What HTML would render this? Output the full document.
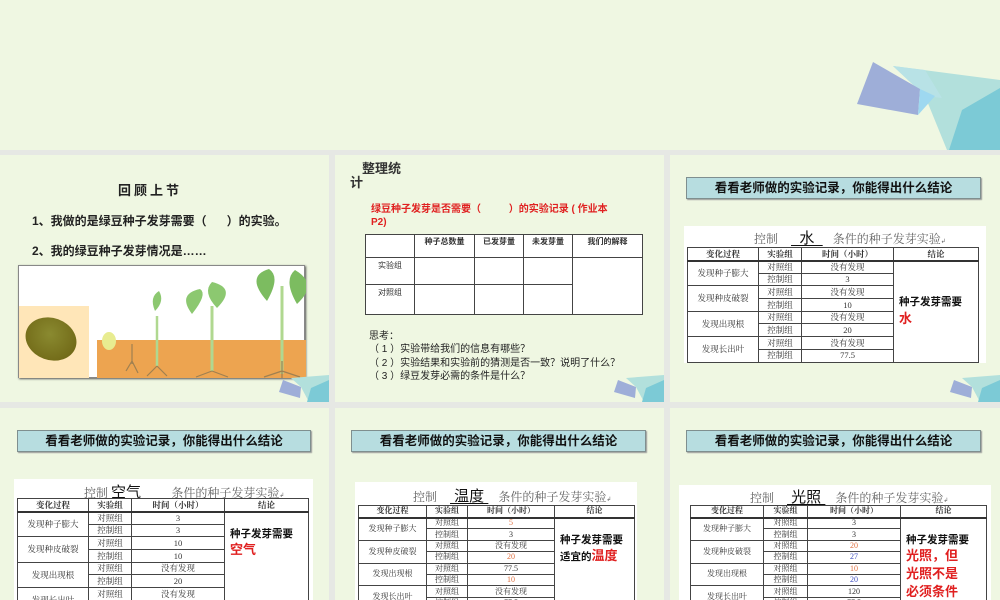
<!DOCTYPE html>
<html><head><meta charset="utf-8">
<style>
*{margin:0;padding:0;box-sizing:border-box}
body{width:1000px;height:600px;overflow:hidden;background:#e6e8e4;position:relative;font-family:"Liberation Sans","Noto Sans CJK SC",sans-serif}
.a{position:absolute}
.p{position:absolute;background:#eff7e2;overflow:hidden}
.hd{position:absolute;background:#b7dde0;border:1px solid #7f8f8f;box-shadow:1px 1px 1px #999;font-weight:bold;font-size:12.5px;text-align:center;line-height:20px;color:#111}
.wb{position:absolute;background:#fff}
table.t{position:absolute;border-collapse:collapse;table-layout:fixed;font-family:"Liberation Serif","Noto Serif CJK SC",serif;font-size:8.5px;color:#333;background:#fff}
table.t td{border:1px solid #444;text-align:center;padding:0;line-height:1;white-space:nowrap;overflow:hidden}
table.t tr.h td{border-bottom:2px solid #333;font-weight:bold}
.ttl{position:absolute;font-family:"Liberation Serif","Noto Serif CJK SC",serif;color:#666;font-size:12px;white-space:nowrap}
.ttl b{font-family:"Liberation Sans","Noto Sans CJK SC",sans-serif;font-weight:normal;color:#111;font-size:15px;text-decoration:underline;text-underline-offset:2px;padding:0 10px}
.cc{font-family:"Liberation Sans","Noto Sans CJK SC",sans-serif;font-weight:bold;color:#111;text-align:left!important;vertical-align:middle;font-size:10.5px;padding-left:5px!important;white-space:normal!important;line-height:1.4!important}
.red{color:#e02020}
.o{color:#e07040}.bl{color:#4050c0}
</style></head><body>
<div class="p" style="left:0;top:0;width:1000px;height:150px"></div>
<svg class="a" style="left:0;top:0" width="1000" height="150">
<polygon points="893,66 1000,80 1000,150 947,150 925,96" fill="#b2e0dc"/>
<polygon points="893,66 925,96 942,98 925,70" fill="#b8e2e6"/>
<polygon points="873,62 920,89 918,115 857,104" fill="#9eaed8"/>
<polygon points="920,89 935,96 918,115" fill="#9ed8f0"/>
<polygon points="962,110 1000,88 1000,150 949,150" fill="#7ccad6"/>
</svg>

<!-- Row 1 -->
<div class="p" style="left:0;top:155px;width:329px;height:247px">
  <div class="a" style="left:0;top:25px;width:300px;text-align:center;font-weight:bold;font-size:13px;letter-spacing:3px;color:#222">回顾上节</div>
  <div class="a" style="left:32px;top:57px;font-weight:bold;font-size:12px;color:#222">1、我做的是绿豆种子发芽需要（&nbsp;&nbsp;&nbsp;&nbsp;&nbsp;&nbsp;）的实验。</div>
  <div class="a" style="left:32px;top:87px;font-weight:bold;font-size:12px;color:#222">2、我的绿豆种子发芽情况是……</div>
  <div class="a" style="left:18px;top:110px;width:287px;height:113px;background:#fff;border:1px solid #888;box-shadow:1px 1px 2px #555">
    <div class="a" style="left:0;top:40px;width:70px;height:72px;background:#ffe6b8"></div>
    <div class="a" style="left:6px;top:52px;width:52px;height:42px;border-radius:50%;background:radial-gradient(circle at 45% 40%,#8a8a30,#6a6010);transform:rotate(20deg)"></div>
    <div class="a" style="left:78px;top:74px;width:209px;height:38px;background:#eda450"></div>
    <svg class="a" style="left:78px;top:0" width="209" height="112">
      <ellipse cx="12" cy="75" rx="7" ry="9" fill="#e8ec90"/>
      <path d="M115 105 V40 M185 108 V20" stroke="#b0d890" stroke-width="3"/>
      <path d="M60 100 V50" stroke="#b0d890" stroke-width="2.5"/>
      <path d="M95 48 q-15 -20 8 -25 q8 5 -8 25z M120 42 q20 -20 -5 -26 q-10 10 5 26z" fill="#8cc870"/>
      <path d="M170 35 q-22 -25 2 -32 q12 8 -2 32z M200 38 q22 -20 -2 -34 q-12 10 2 34z" fill="#7cbc60"/>
      <path d="M58 45 q-6 -14 4 -20 q6 10 -4 20z" fill="#8cc870"/>
      <path d="M35 78 v20 M35 95 l-6 10 M35 95 l6 12 M60 100 l-10 10 M60 100 l10 10 M115 105 l-16 6 M115 105 l16 6 M185 105 l-18 6 M185 105 l18 6 M185 95 v17" stroke="#a08050" stroke-width="1.2"/>
    </svg>
  </div>
  <svg class="a" style="left:279px;top:215px" width="50" height="32"><polygon points="4,10 22,17 21,28 0,22" fill="#9eaed8"/><polygon points="12,8 50,5 50,32 30,32 22,17" fill="#b2e0dc"/><polygon points="32,18 50,10 50,32 28,32" fill="#7ccad6"/></svg>
</div>

<div class="p" style="left:335px;top:155px;width:329px;height:247px">
  <div class="a" style="left:15px;top:7px;font-weight:bold;font-size:13px;color:#333;width:60px;line-height:14px"><span style="margin-left:12px">整理统</span><br>计</div>
  <div class="a" style="left:36px;top:48px;color:#e02020;font-weight:bold;font-size:10px;line-height:13px;width:280px">绿豆种子发芽是否需要（&nbsp;&nbsp;&nbsp;&nbsp;&nbsp;&nbsp;&nbsp;&nbsp;&nbsp;&nbsp;）的实验记录 ( 作业本<br>P2)</div>
  <table class="t" style="left:30px;top:79px;width:277px;font-family:'Liberation Sans','Noto Sans CJK SC',sans-serif;font-size:8px;font-weight:bold;color:#333">
    <colgroup><col style="width:49px"><col style="width:60px"><col style="width:49px"><col style="width:49px"><col style="width:70px"></colgroup>
    <tr style="height:23px"><td></td><td style="vertical-align:top;padding-top:3px">种子总数量</td><td style="vertical-align:top;padding-top:3px">已发芽量</td><td style="vertical-align:top;padding-top:3px">未发芽量</td><td style="vertical-align:top;padding-top:3px">我们的解释</td></tr>
    <tr style="height:27px"><td style="vertical-align:top;padding-top:4px;font-weight:normal">实验组</td><td></td><td></td><td></td><td rowspan="2"></td></tr>
    <tr style="height:30px"><td style="vertical-align:top;padding-top:4px;font-weight:normal">对照组</td><td></td><td></td><td></td></tr>
  </table>
  <div class="a" style="left:34px;top:175px;font-size:10px;line-height:13.3px;color:#222">思考：<br>（ 1 ）实验带给我们的信息有哪些？<br>（ 2 ）实验结果和实验前的猜测是否一致？说明了什么？<br>（ 3 ）绿豆发芽必需的条件是什么？</div>
  <svg class="a" style="left:279px;top:215px" width="50" height="32"><polygon points="4,10 22,17 21,28 0,22" fill="#9eaed8"/><polygon points="12,8 50,5 50,32 30,32 22,17" fill="#b2e0dc"/><polygon points="32,18 50,10 50,32 28,32" fill="#7ccad6"/></svg>
</div>

<div class="p" style="left:670px;top:155px;width:330px;height:247px">
  <div class="hd" style="left:16px;top:22px;width:295px;height:22px">看看老师做的实验记录，你能得出什么结论</div>
  <div class="wb" style="left:14px;top:71px;width:302px;height:137px"></div>
  <div class="ttl" style="left:84px;top:72px">控制 <b>&nbsp;&nbsp;水&nbsp;&nbsp;</b>条件的种子发芽实验<span style="font-size:6px">↲</span></div>
  <table class="t" style="left:17px;top:92px;width:291px">
    <colgroup><col style="width:71px"><col style="width:43px"><col style="width:92px"><col style="width:85px"></colgroup>
    <tr class="h" style="height:13px"><td>变化过程</td><td>实验组</td><td>时间（小时）</td><td>结论</td></tr>
    <tr style="height:12.7px"><td rowspan="2">发现种子膨大</td><td>对照组</td><td>没有发现</td><td rowspan="8" class="cc">种子发芽需要<br><span class="red" style="font-size:13px">水</span></td></tr>
    <tr style="height:12.7px"><td>控制组</td><td>3</td></tr>
    <tr style="height:12.7px"><td rowspan="2">发现种皮破裂</td><td>对照组</td><td>没有发现</td></tr>
    <tr style="height:12.7px"><td>控制组</td><td>10</td></tr>
    <tr style="height:12.7px"><td rowspan="2">发现出现根</td><td>对照组</td><td>没有发现</td></tr>
    <tr style="height:12.7px"><td>控制组</td><td>20</td></tr>
    <tr style="height:12.7px"><td rowspan="2">发现长出叶</td><td>对照组</td><td>没有发现</td></tr>
    <tr style="height:12.7px"><td>控制组</td><td>77.5</td></tr>
  </table>
  <svg class="a" style="left:280px;top:215px" width="50" height="32"><polygon points="4,10 22,17 21,28 0,22" fill="#9eaed8"/><polygon points="12,8 50,5 50,32 30,32 22,17" fill="#b2e0dc"/><polygon points="32,18 50,10 50,32 28,32" fill="#7ccad6"/></svg>
</div>

<!-- Row 2 -->
<div class="p" style="left:0;top:408px;width:329px;height:192px">
  <div class="hd" style="left:17px;top:22px;width:294px;height:22px">看看老师做的实验记录，你能得出什么结论</div>
  <div class="wb" style="left:14px;top:71px;width:299px;height:125px"></div>
  <div class="ttl" style="left:84px;top:73px">控制 <b style="padding:0 22px 0 0">空气&nbsp;&nbsp;</b>条件的种子发芽实验<span style="font-size:6px">↲</span></div>
  <table class="t" style="left:17px;top:90px;width:291px">
    <colgroup><col style="width:71px"><col style="width:43px"><col style="width:93px"><col style="width:84px"></colgroup>
    <tr class="h" style="height:13px"><td>变化过程</td><td>实验组</td><td>时间（小时）</td><td>结论</td></tr>
    <tr style="height:12.7px"><td rowspan="2">发现种子膨大</td><td>对照组</td><td>3</td><td rowspan="8" class="cc" style="vertical-align:top;padding-top:14px">种子发芽需要<br><span class="red" style="font-size:13px">空气</span><br><br><br><br></td></tr>
    <tr style="height:12.7px"><td>控制组</td><td>3</td></tr>
    <tr style="height:12.7px"><td rowspan="2">发现种皮破裂</td><td>对照组</td><td>10</td></tr>
    <tr style="height:12.7px"><td>控制组</td><td>10</td></tr>
    <tr style="height:12.7px"><td rowspan="2">发现出现根</td><td>对照组</td><td>没有发现</td></tr>
    <tr style="height:12.7px"><td>控制组</td><td>20</td></tr>
    <tr style="height:12.7px"><td rowspan="2">发现长出叶</td><td>对照组</td><td>没有发现</td></tr>
    <tr style="height:12.7px"><td>控制组</td><td>77.5</td></tr>
  </table>
</div>

<div class="p" style="left:335px;top:408px;width:329px;height:192px">
  <div class="hd" style="left:16px;top:22px;width:295px;height:22px">看看老师做的实验记录，你能得出什么结论</div>
  <div class="wb" style="left:20px;top:74px;width:282px;height:120px"></div>
  <div class="ttl" style="left:78px;top:77px">控制 <b>&nbsp;温度&nbsp;</b>条件的种子发芽实验<span style="font-size:6px">↲</span></div>
  <table class="t" style="left:23px;top:97px;width:276px;font-size:8px">
    <colgroup><col style="width:68px"><col style="width:41px"><col style="width:87px"><col style="width:80px"></colgroup>
    <tr class="h" style="height:12px"><td>变化过程</td><td>实验组</td><td>时间（小时）</td><td>结论</td></tr>
    <tr style="height:11.4px"><td rowspan="2">发现种子膨大</td><td>对照组</td><td class="o">5</td><td rowspan="8" class="cc" style="vertical-align:top;padding-top:14px">种子发芽需要<br>适宜的<span class="red" style="font-size:13px">温度</span></td></tr>
    <tr style="height:11.4px"><td>控制组</td><td>3</td></tr>
    <tr style="height:11.4px"><td rowspan="2">发现种皮破裂</td><td>对照组</td><td>没有发现</td></tr>
    <tr style="height:11.4px"><td>控制组</td><td class="o">20</td></tr>
    <tr style="height:11.4px"><td rowspan="2">发现出现根</td><td>对照组</td><td>77.5</td></tr>
    <tr style="height:11.4px"><td>控制组</td><td class="o">10</td></tr>
    <tr style="height:11.4px"><td rowspan="2">发现长出叶</td><td>对照组</td><td>没有发现</td></tr>
    <tr style="height:11.4px"><td>控制组</td><td>77.5</td></tr>
  </table>
</div>

<div class="p" style="left:670px;top:408px;width:330px;height:192px">
  <div class="hd" style="left:16px;top:22px;width:295px;height:22px">看看老师做的实验记录，你能得出什么结论</div>
  <div class="wb" style="left:9px;top:77px;width:312px;height:120px"></div>
  <div class="ttl" style="left:80px;top:78px">控制 <b>&nbsp;光照&nbsp;</b>条件的种子发芽实验<span style="font-size:6px">↲</span></div>
  <table class="t" style="left:20px;top:97px;width:296px;font-size:8px">
    <colgroup><col style="width:73px"><col style="width:44px"><col style="width:93px"><col style="width:86px"></colgroup>
    <tr class="h" style="height:12px"><td>变化过程</td><td>实验组</td><td>时间（小时）</td><td>结论</td></tr>
    <tr style="height:11.4px"><td rowspan="2">发现种子膨大</td><td>对照组</td><td>3</td><td rowspan="8" class="cc" style="vertical-align:top;padding-top:14px">种子发芽需要<br><span class="red" style="font-size:13px;line-height:17px">光照，但<br>光照不是<br>必须条件</span></td></tr>
    <tr style="height:11.4px"><td>控制组</td><td>3</td></tr>
    <tr style="height:11.4px"><td rowspan="2">发现种皮破裂</td><td>对照组</td><td class="o">20</td></tr>
    <tr style="height:11.4px"><td>控制组</td><td class="bl">27</td></tr>
    <tr style="height:11.4px"><td rowspan="2">发现出现根</td><td>对照组</td><td class="o">10</td></tr>
    <tr style="height:11.4px"><td>控制组</td><td class="bl">20</td></tr>
    <tr style="height:11.4px"><td rowspan="2">发现长出叶</td><td>对照组</td><td>120</td></tr>
    <tr style="height:11.4px"><td>控制组</td><td>77.5</td></tr>
  </table>
</div>
</body></html>
